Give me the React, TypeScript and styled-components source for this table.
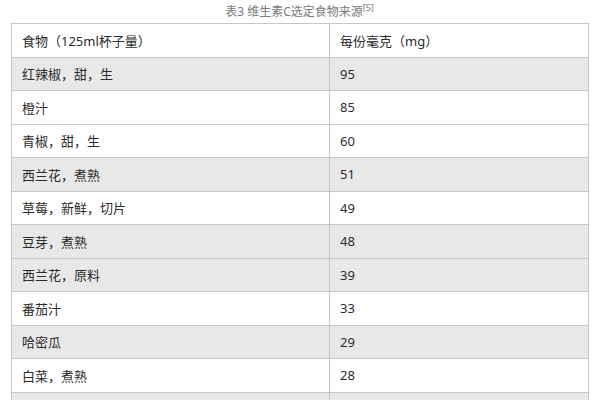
import styled, { createGlobalStyle } from 'styled-components';

const GlobalStyle = createGlobalStyle`
    body {
        margin: 0;
        background: #ffffff;
        font-family: "Noto Sans", "Noto Sans CJK SC", sans-serif;
    }
`;

const Wrapper = styled.div`
    padding: 0 13px 0 11px;
    width: 601px;
    height: 400px;
    box-sizing: border-box;
    overflow: hidden;
`;

const Caption = styled.div`
    height: 23px;
    line-height: 24px;
    text-align: center;
    font-size: 12px;
    color: #7a7a7a;
    sup {
        font-size: 9px;
        line-height: 0;
        vertical-align: 5px;
    }
`;

const Table = styled.table`
    width: 578px;
    border-collapse: collapse;
    table-layout: fixed;
    font-size: 13px;
    color: #2b2b2b;
`;

const Row = styled.tr<{ $shaded?: boolean }>`
    height: 33.5px;
    background: ${(p) => (p.$shaded ? '#e8e8e8' : '#ffffff')};
`;

const Cell = styled.td`
    border: 1px solid #c6c6c6;
    padding: 0 0 0 10px;
    vertical-align: middle;
    white-space: nowrap;
`;

const foods: [string, string, boolean][] = [
    ['红辣椒，甜，生', '95', true],
    ['橙汁', '85', false],
    ['青椒，甜，生', '60', false],
    ['西兰花，煮熟', '51', true],
    ['草莓，新鲜，切片', '49', false],
    ['豆芽，煮熟', '48', true],
    ['西兰花，原料', '39', true],
    ['番茄汁', '33', false],
    ['哈密瓜', '29', true],
    ['白菜，煮熟', '28', false],
    ['花椰菜，生', '26', true],
];

export default function App() {
    return (
        <Wrapper>
            <GlobalStyle />
            <Caption>
                表3 维生素C选定食物来源<sup>[5]</sup>
            </Caption>
            <Table>
                <colgroup>
                    <col style={{ width: 318 }} />
                    <col />
                </colgroup>
                <tbody>
                    <Row>
                        <Cell>食物（125ml杯子量）</Cell>
                        <Cell>每份毫克（mg）</Cell>
                    </Row>
                    {foods.map(([name, mg, shaded]) => (
                        <Row key={name} $shaded={shaded}>
                            <Cell>{name}</Cell>
                            <Cell>{mg}</Cell>
                        </Row>
                    ))}
                </tbody>
            </Table>
        </Wrapper>
    );
}
